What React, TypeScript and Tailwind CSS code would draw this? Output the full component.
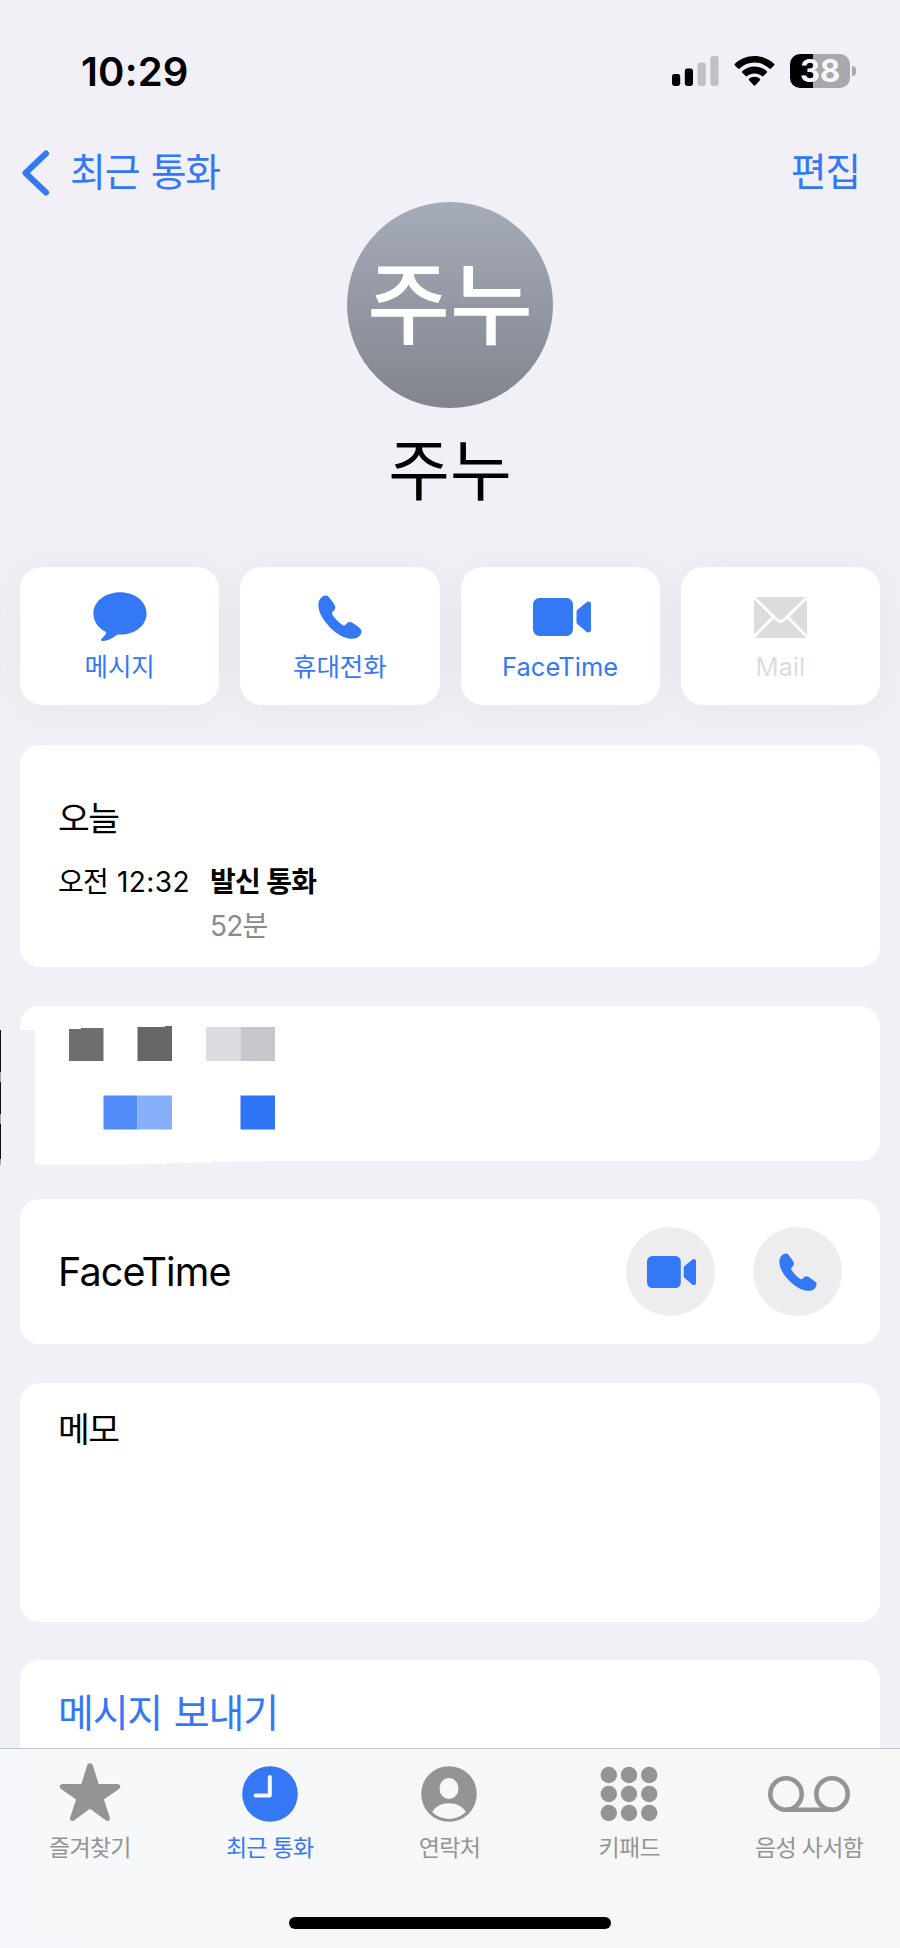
import type { ReactNode } from "react";

const MessageIcon = () => (
  <svg width="54" height="50" viewBox="0 0 54 50" fill="currentColor">
    <path d="M27 0.3C12.2 0.3 0.4 9.6 0.4 21.4c0 8 4.900 14.600 12.200 18.400 0.700 0.400 0.700 1 0.300 1.700-1 1.900-2.600 3.700-4.300 5.300-1.200 1.200-0.500 2.400 1.100 2.300 5-0.400 9.700-2.900 13.300-5.600 1-0.700 1.800-0.900 4-0.900 14.800 0 26.600-9.300 26.600-21.200S41.800 0.300 27 0.300Z" />
  </svg>
);

const PhoneIcon = ({ size }: { size: number }) => (
  <svg width={size} height={size} viewBox="0 0 44 44" fill="currentColor">
    <path d="M3.200 2.800C5.500 0.400 8.800-0.400 10.700 1.700c2 2.400 4.300 5.700 6 8.500 1 1.900 0.700 3.700-0.700 5.200l-1.500 1.600c-0.700 0.800-0.700 1.500-0.200 2.400 1.300 2.200 3.200 4.500 5.400 6.600 2.200 2.100 3.700 3.200 5.300 4.200 0.800 0.500 1.500 0.400 2.200-0.300l1.700-1.700c1.500-1.500 3.300-1.700 5.100-0.700 2.900 1.800 5.600 3.700 8 5.700 2.200 1.900 1.900 5-0.400 7.500-2.200 2.400-5 3.200-8.300 3-7.200-0.400-14.700-4.800-21.200-11.300C5.600 25.900 0.900 18.300 0.400 11.100 0.200 7.800 1 5 3.200 2.800Z" />
  </svg>
);

const VideoIcon = ({ width }: { width: number }) => (
  <svg width={width} viewBox="0 0 58 38" fill="currentColor">
    <rect width="40" height="38" rx="6.500" />
    <path d="M43.500 14.500c0-1.300 0.400-2.100 1.300-2.900l8.700-7.300c1.800-1.400 4.500-0.700 4.500 1.700v26c0 2.400-2.700 3.100-4.500 1.700l-8.700-7.300c-0.900-0.800-1.300-1.600-1.300-2.900Z" />
  </svg>
);

const MailIcon = () => (
  <svg width="53" height="41" viewBox="0 0 53 41">
    <rect width="53" height="41" rx="3" fill="currentColor" />
    <g fill="none" stroke="#fff" strokeWidth="3">
      <path d="M0 0.500 22 22c3 3 6 3 9 0L53 0.500" />
      <path d="M19 20.500 0 39.500M34 20.500l19 19" />
    </g>
  </svg>
);

const StarIcon = () => (
  <svg width="62" height="60" viewBox="0 0 62 60" fill="currentColor" className="-mt-[5px]">
    <path d="M31 1.300c1.400 0 2.400 0.800 2.900 2.300l5.800 18.500h18.500c3.300 0 4.100 3.200 1.700 5L44.900 37.600 50.700 55c1.100 3.200-1.500 5-4 3.300L31 46.700 15.300 58.300c-2.500 1.700-5.100-0.100-4-3.300l5.800-17.400L2.100 27.100c-2.400-1.800-1.600-5 1.700-5h18.500L28.100 3.600c0.500-1.500 1.500-2.300 2.900-2.300Z" />
  </svg>
);

const ClockIcon = () => (
  <svg width="56" height="56" viewBox="0 0 56 56" fill="none">
    <circle cx="28" cy="28" r="27.800" fill="currentColor" />
    <path d="M27.800 11v18.500H13.500" stroke="#f7f8f9" strokeWidth="4" strokeLinecap="round" strokeLinejoin="round" />
  </svg>
);

const ContactIcon = () => (
  <svg width="56" height="56" viewBox="0 0 56 56">
    <circle cx="28" cy="28" r="27.800" fill="currentColor" />
    <ellipse cx="28" cy="22.500" rx="9.500" ry="10.600" fill="#f7f7f7" />
    <path d="M11.200 46C14.500 40.500 20.600 37.300 28 37.300S41.500 40.500 44.800 46C40.600 50.200 34.600 52.800 28 52.800S15.400 50.200 11.200 46Z" fill="#f7f7f7" />
  </svg>
);

const KeypadIcon = () => (
  <svg width="58" height="56" viewBox="0 0 58 56" fill="currentColor">
    {[9, 28, 47].map((y) =>
      [8.800, 29, 49.200].map((x) => <circle key={`${x}-${y}`} cx={x} cy={y} r="8.200" />)
    )}
  </svg>
);

const VoicemailIcon = () => (
  <svg width="84" height="38" viewBox="0 0 84 38" fill="none" stroke="currentColor" strokeWidth="4.600">
    <circle cx="19" cy="19" r="15.700" />
    <circle cx="65" cy="19" r="15.700" />
    <path d="M19 34.700h46" />
  </svg>
);

const Signal = () => (
  <svg width="47" height="30" viewBox="0 0 47 30">
    <rect y="18" width="8.200" height="12" rx="2.400" />
    <rect x="12.800" y="12.500" width="8.200" height="17.500" rx="2.400" />
    <rect x="25.600" y="6.500" width="8.200" height="23.500" rx="2.400" fill="#c1c0c6" />
    <rect x="38.400" width="8.200" height="30" rx="2.400" fill="#c1c0c6" />
  </svg>
);

const Wifi = () => (
  <svg width="41" height="30" viewBox="0 0 41 30">
    <path d="M20.500 0c7.500 0 14.400 2.900 19.600 7.800 0.500 0.500 0.500 1.100 0 1.600l-3.200 3.200c-0.500 0.500-1 0.500-1.500 0C31.400 8.800 26.200 6.500 20.500 6.500S9.600 8.800 5.600 12.600c-0.500 0.500-1 0.500-1.500 0L0.900 9.400c-0.500-0.500-0.500-1.100 0-1.600C6.100 2.900 13 0 20.500 0Z" />
    <path d="M20.500 10.500c4.600 0 8.800 1.700 12.100 4.600 0.600 0.500 0.600 1.100 0.100 1.600l-3.300 3.300c-0.500 0.500-1 0.500-1.500 0.100-2-1.700-4.600-2.700-7.400-2.700s-5.400 1-7.400 2.700c-0.500 0.400-1 0.400-1.500-0.100l-3.300-3.300c-0.500-0.500-0.500-1.100 0.100-1.600 3.300-2.900 7.500-4.600 12.100-4.600Z" />
    <path d="M20.500 20.800c2 0 3.900 0.700 5.300 1.900 0.600 0.500 0.600 1 0.100 1.500l-4.500 5.100c-0.600 0.600-1.200 0.600-1.800 0l-4.500-5.100c-0.500-0.500-0.500-1 0.100-1.500 1.400-1.200 3.300-1.900 5.300-1.900Z" />
  </svg>
);

const Battery = () => (
  <div className="flex items-center gap-[2px]">
    <div className="flex h-[34px] w-[60px] items-center justify-center rounded-[10px] bg-[linear-gradient(to_right,#000_23px,#a9a8ad_23px)] text-[31px] leading-[34px] font-bold text-[#f7f7fa]">
      38
    </div>
    <div className="h-[10px] w-[4px] rounded-r-full bg-[#a9a8ad]" />
  </div>
);

const StatusBar = () => (
  <div className="flex h-[142px] items-center justify-between pr-[44px] pl-[81px]">
    <span className="pt-px text-[40px] font-semibold tracking-[0.2px]">10:29</span>
    <div className="flex items-center gap-[15px]">
      <Signal />
      <Wifi />
      <Battery />
    </div>
  </div>
);

const NavBar = () => (
  <div className="flex h-[60px] items-center justify-between pt-px pr-[40px] pl-[22px] text-[39px] tracking-[-1.2px] text-[#3478f6]">
    <a href="#" className="flex items-center gap-[20px] [word-spacing:1.500px]">
      <svg width="28" height="46" viewBox="0 0 28 46" fill="none" stroke="currentColor" strokeWidth="6" strokeLinecap="round" strokeLinejoin="round">
        <path d="M24 3.500 3.500 23 24 42.500" />
      </svg>
      최근 통화
    </a>
    <a href="#">편집</a>
  </div>
);

type ActionProps = { icon: ReactNode; label: string; className?: string };

const Action = ({ icon, label, className = "text-[#3478f6]" }: ActionProps) => (
  <button
    className={`flex h-[138px] flex-1 flex-col items-center rounded-[22px] bg-white pt-[20px] shadow-[0_4px_40px_rgba(0,0,0,0.05)] ${className}`}
  >
    <span className="flex h-[60px] items-center">{icon}</span>
    <span className="mt-px text-[25.500px] leading-[38px]">{label}</span>
  </button>
);

// Number card hidden behind a coarse mosaic
const HiddenNumber = () => (
  <section className="relative mt-[39px] h-[155px] rounded-[20px] bg-white">
    <svg className="absolute top-0 -left-[20px]" width="300" height="160" viewBox="0 0 300 160">
      <path d="M19 24h16v136H19Z" fill="#f1f0f6" />
      <path d="M35 130h265v25l-90 0.500v1l-45 0.500v1l-40 0.500H35Z" fill="#fff" />
      <path d="M0 24h1v135H0Z" fill="#111" />
      <path d="M0 66h1v10H0ZM0 108h1v10H0ZM0 153h1v6H0Z" fill="#a5a5a8" />
      <path d="M69 23h12v-1h22.500v33H69Z" fill="#6e6e6e" />
      <path d="M137.500 21H165v-1h7v35h-34.500Z" fill="#676767" />
      <path d="M206 21h34.500v34H206Z" fill="#dddce1" />
      <path d="M240.500 21H275v34h-34.500Z" fill="#c7c6cc" />
      <path d="M103.500 89.500h34v34h-34Z" fill="#508bf7" />
      <path d="M137.500 89.500H172v34h-34.500Z" fill="#85aff9" />
      <path d="M240.500 89.500H275v34h-34.500Z" fill="#3075f6" />
    </svg>
  </section>
);

const RoundButton = ({ children }: { children: ReactNode }) => (
  <button className="flex size-[89px] items-center justify-center rounded-full bg-[#ededf0] text-[#3478f6]">
    {children}
  </button>
);

const Tab = ({ icon, label, active }: { icon: ReactNode; label: string; active?: boolean }) => (
  <a
    href="#"
    className={`flex flex-1 flex-col items-center pt-[13px] ${active ? "text-[#3478f6]" : "text-[#949494]"}`}
  >
    <span className="flex h-[64px] items-center">{icon}</span>
    <span className="mt-[5px] text-[23px] leading-[34px] tracking-[-0.7px]">{label}</span>
  </a>
);

export default function App() {
  return (
    <div className="flex h-[1948px] w-[900px] flex-col overflow-hidden bg-[#f1f0f6] font-[Inter,'Noto_Sans_CJK_KR',sans-serif] text-black">
      <StatusBar />
      <NavBar />

      <div className="flex flex-col items-center">
        <div className="flex size-[206px] items-center justify-center rounded-full bg-linear-to-b from-[#a6abb9] to-[#82858d] text-[90px] leading-none font-medium text-white">
          주누
        </div>
        <h1 className="mt-[23px] text-[67px] leading-[80px]">주누</h1>
      </div>

      <main className="flex-1 overflow-hidden px-[20px] pt-[56px]">
        <div className="flex gap-[21px]">
          <Action icon={<MessageIcon />} label="메시지" />
          <Action icon={<PhoneIcon size={44} />} label="휴대전화" />
          <Action
            icon={
              <span className="pl-[4px]">
                <VideoIcon width={58} />
              </span>
            }
            label="FaceTime"
          />
          <Action icon={<MailIcon />} label="Mail" className="text-[#dcdcde]" />
        </div>

        <section className="mt-[40px] h-[222px] rounded-[20px] bg-white px-[38px] pt-[49px]">
          <h2 className="text-[34.500px] leading-[50px] tracking-[-1.5px]">오늘</h2>
          <div className="mt-[16px] flex gap-[20px] text-[28px] leading-[44px] tracking-[-0.8px]">
            <p className="w-[132px] whitespace-nowrap">
              오전 <span className="ml-[2px] tracking-[0.4px]">12:32</span>
            </p>
            <div>
              <p className="font-semibold">발신 통화</p>
              <p className="text-[#8a8a8d]">52분</p>
            </div>
          </div>
        </section>

        <HiddenNumber />

        <section className="mt-[38px] flex h-[145px] items-center justify-between rounded-[20px] bg-white pr-[38px] pl-[38px]">
          <span className="pt-[2px] text-[39.500px] tracking-[-0.9px]">FaceTime</span>
          <div className="flex gap-[38px]">
            <RoundButton>
              <span className="pt-px pl-px">
                <VideoIcon width={49} />
              </span>
            </RoundButton>
            <RoundButton>
              <PhoneIcon size={38} />
            </RoundButton>
          </div>
        </section>

        <section className="mt-[39px] h-[239px] rounded-[20px] bg-white px-[38px] pt-[22px]">
          <h2 className="text-[34.500px] leading-[50px] tracking-[-1.5px]">메모</h2>
        </section>

        <section className="mt-[38px] h-[140px] rounded-[20px] bg-white px-[38px] pt-[25px]">
          <a href="#" className="text-[39px] leading-[56px] tracking-[-1.200px] text-[#3478f6] [word-spacing:2px]">
            메시지 보내기
          </a>
        </section>
      </main>

      <footer className="flex h-[200px] flex-col items-center border-t border-[#c4c3c7] bg-linear-to-r from-[#f6f9fb] to-[#f7f7f8] to-40%">
        <nav className="flex w-full pr-px">
          <Tab icon={<StarIcon />} label="즐겨찾기" />
          <Tab icon={<ClockIcon />} label="최근 통화" active />
          <Tab icon={<ContactIcon />} label="연락처" />
          <Tab icon={<KeypadIcon />} label="키패드" />
          <Tab icon={<VoicemailIcon />} label="음성 사서함" />
        </nav>
        <div className="mt-[52px] h-[12px] w-[322px] rounded-full bg-black" />
      </footer>
    </div>
  );
}
